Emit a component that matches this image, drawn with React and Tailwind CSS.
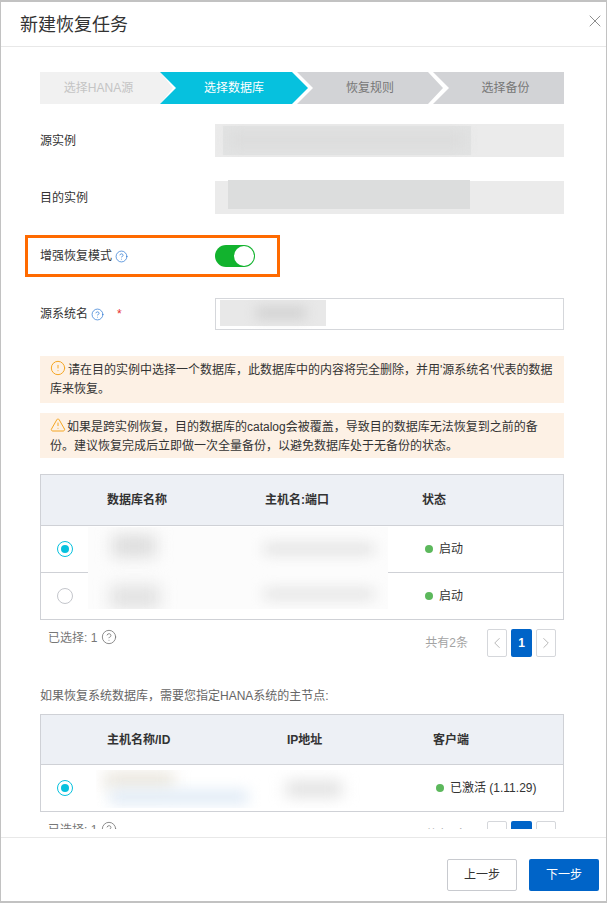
import React from 'react';
import { X, ChevronLeft, ChevronRight, CircleHelp, CircleAlert, TriangleAlert } from 'lucide-react';

const Blur = ({ className }) => <div className={`absolute ${className}`} />;

const Radio = ({ checked }) =>
  checked ? (
    <span className="flex h-[16px] w-[16px] items-center justify-center rounded-full border border-[#06c1de] bg-white">
      <span className="h-[8px] w-[8px] rounded-full bg-[#06c1de]" />
    </span>
  ) : (
    <span className="block h-[16px] w-[16px] rounded-full border border-[#c4c6cc] bg-white" />
  );

const Pagination = () => (
  <div className="flex items-center">
    <span className="mr-[19px] text-[12px] text-[#a3a3a3]">共有2条</span>
    <span className="flex h-[28px] w-[20px] items-center justify-center rounded-[2px] border border-[#d5d7db] text-[#a0a0a0]">
      <ChevronLeft size={20} strokeWidth={1} />
    </span>
    <span className="ml-[4px] flex h-[28px] w-[21px] items-center justify-center rounded-[2px] bg-[#0064c8] text-[12px] font-bold text-white">
      1
    </span>
    <span className="ml-[4px] flex h-[28px] w-[20px] items-center justify-center rounded-[2px] border border-[#d5d7db] text-[#a0a0a0]">
      <ChevronRight size={20} strokeWidth={1} />
    </span>
  </div>
);

const Status = ({ text, className }) => (
  <div className={`flex items-center text-[12px] text-[#333] ${className}`}>
    <span className="mr-[6px] h-[8px] w-[8px] rounded-full bg-[#5cb85c]" />
    {text}
  </div>
);

const Selected = () => (
  <div className="flex h-[37px] justify-between pr-[8px] pl-[8px]">
    <span className="mt-[8px] flex h-[20px] items-center text-[#777]">
      已选择: 1
      <CircleHelp size={16} strokeWidth={1.25} className="ml-[4px] mb-[3px]" />
    </span>
    <div className="mt-[9px]"><Pagination /></div>
  </div>
);

export default function App() {
  return (
    <div className="flex h-[903px] w-[607px] flex-col overflow-hidden border-t-[2px] border-r-[1px] border-b-[2px] border-l-[1px] border-[#c2c2c2] bg-white font-['Liberation_Sans','Noto_Sans_CJK_SC',sans-serif] text-[12px] text-[#333]">
      <div className="flex h-[45px] shrink-0 items-center justify-between border-b border-[#e8e8e8] pr-[1px] pl-[19px]">
        <h1 className="mt-[3px] text-[18px] font-normal text-[#333]">新建恢复任务</h1>
        <X size={20} strokeWidth={1} className="mb-[6px] text-[#777]" />
      </div>

      <div className="h-[782px] shrink-0 overflow-hidden pt-[25px] pr-[42px] pl-[39px]">
        <div className="flex h-[32px] text-[12px]">
          <div className="flex w-[133px] items-center justify-center bg-[#f1f1f1] pr-[16px] text-[#c4c4c4] [clip-path:polygon(0_0,120px_0,133px_50%,120px_100%,0_100%)]">
            选择HANA源
          </div>
          <div className="ml-[-13px] flex w-[148px] items-center justify-center bg-[#06c1de] text-white [clip-path:polygon(0_0,132px_0,148px_50%,132px_100%,0_100%,16px_50%)]">
            选择数据库
          </div>
          <div className="ml-[-11px] flex w-[146px] items-center justify-center bg-[#d2d3d6] text-[#777] [clip-path:polygon(0_0,131px_0,146px_50%,131px_100%,0_100%,16px_50%)]">
            恢复规则
          </div>
          <div className="ml-[-10px] flex w-[131px] items-center justify-center bg-[#d2d3d6] pl-[14px] text-[#777] [clip-path:polygon(0_0,100%_0,100%_100%,0_100%,16px_50%)]">
            选择备份
          </div>
        </div>

        <div className="mt-[20px] flex h-[33px] items-center">
          <label className="w-[175px] shrink-0">源实例</label>
          <div className="relative h-full flex-1 overflow-hidden bg-[#ebebeb]">
            <div className="absolute top-[2px] left-[8px] h-[29px] w-[248px] bg-[#e2e3e3]" />
            <Blur className="top-[8px] left-[14px] h-[16px] w-[236px] bg-[#dcdcdc] blur-[7px]" />
          </div>
        </div>

        <div className="mt-[24px] flex h-[33px] items-center">
          <label className="w-[175px] shrink-0">目的实例</label>
          <div className="relative h-full flex-1 bg-[#ebebeb]">
            <div className="absolute top-[-1px] left-[13px] h-[29px] w-[242px] bg-[#dcdddd]" />
          </div>
        </div>

        <div className="relative mt-[31px] flex h-[22px] items-center">
          <label className="flex w-[175px] shrink-0 items-center">
            增强恢复模式
            <CircleHelp size={13} strokeWidth={1.25} className="ml-[3px] text-[#1f6fd0]" />
          </label>
          <div className="flex h-[22px] w-[40px] items-center justify-end rounded-full bg-[#12b32e] pr-[1px]">
            <span className="h-[20px] w-[20px] rounded-full bg-white" />
          </div>
          <div className="absolute top-[-10px] left-[-15px] h-[42px] w-[255px] border-[3px] border-[#ff6a00]" />
        </div>

        <div className="mt-[31px] flex h-[32px] items-center">
          <label className="flex w-[175px] shrink-0 items-center">
            源系统名
            <CircleHelp size={13} strokeWidth={1.25} className="ml-[3px] text-[#1f6fd0]" />
            <span className="ml-[13px] text-[#e62e2e]">*</span>
          </label>
          <div className="relative h-full flex-1 overflow-hidden border border-[#d5d7db] bg-white">
            <div className="absolute top-[1px] left-[4px] h-[26px] w-[106px] bg-[#e8e8e8]" />
            <Blur className="top-[8px] left-[40px] h-[12px] w-[50px] bg-[#d2d2d2] blur-[6px]" />
          </div>
        </div>

        <div className="mt-[26px] h-[47px] bg-[#fdf1e5] px-[10px] pt-[4px] leading-[19px]">
          <CircleAlert size={16} strokeWidth={1.5} className="mr-[2px] inline-block align-[-2px] text-[#f5a623]" />
          请在目的实例中选择一个数据库，此数据库中的内容将完全删除，并用'源系统名'代表的数据库来恢复。
        </div>

        <div className="mt-[10px] h-[45px] bg-[#fdf1e5] px-[10px] pt-[4px] leading-[19px]">
          <TriangleAlert size={16} strokeWidth={1.5} className="mr-[1px] inline-block align-[-2px] text-[#f5a623]" />
          如果是跨实例恢复，目的数据库的catalog会被覆盖，导致目的数据库无法恢复到之前的备份。建议恢复完成后立即做一次全量备份，以避免数据库处于无备份的状态。
        </div>

        <div className="relative mt-[16px] border border-[#cfd1d6]">
          <div className="grid h-[51px] grid-cols-[66px_158px_157px_1fr] items-center border-b border-[#cfd1d6] bg-[#edf0f5] font-bold">
            <span />
            <span>数据库名称</span>
            <span>主机名:端口</span>
            <span>状态</span>
          </div>
          <div className="grid h-[47px] grid-cols-[66px_158px_157px_1fr] items-center border-b border-[#cfd1d6]">
            <span className="pl-[16px]"><Radio checked /></span>
            <span />
            <span />
            <Status text="启动" className="pl-[3px]" />
          </div>
          <div className="grid h-[46px] grid-cols-[66px_158px_157px_1fr] items-center">
            <span className="pl-[16px]"><Radio /></span>
            <span />
            <span />
            <Status text="启动" className="pl-[3px]" />
          </div>
          <div className="absolute top-[52px] left-[47px] h-[82px] w-[300px] overflow-hidden bg-[#fcfcfc]">
            <Blur className="top-[8px] left-[24px] h-[22px] w-[44px] bg-[#dcdcdc] blur-[8px]" />
            <Blur className="top-[17px] left-[176px] h-[10px] w-[110px] bg-[#dedede] blur-[7px]" />
            <Blur className="top-[58px] left-[22px] h-[24px] w-[50px] bg-[#e2e2e2] blur-[8px]" />
            <Blur className="top-[62px] left-[176px] h-[10px] w-[110px] bg-[#e0e0e0] blur-[7px]" />
          </div>
        </div>

        <Selected />

        <p className="mt-[30px] leading-[18px] text-[#666]">如果恢复系统数据库，需要您指定HANA系统的主节点:</p>

        <div className="relative mt-[9px] border border-[#cfd1d6]">
          <div className="grid h-[50px] grid-cols-[66px_180px_146px_1fr] items-center border-b border-[#cfd1d6] bg-[#edf0f5] font-bold">
            <span />
            <span>主机名称/ID</span>
            <span>IP地址</span>
            <span>客户端</span>
          </div>
          <div className="grid h-[46px] grid-cols-[66px_180px_146px_1fr] items-center">
            <span className="pl-[16px]"><Radio checked /></span>
            <span />
            <span />
            <Status text="已激活 (1.11.29)" className="pl-[3px]" />
          </div>
          <div className="absolute top-[55px] left-[55px] h-[38px] w-[290px] overflow-hidden">
            <Blur className="top-[2px] left-[8px] h-[16px] w-[70px] bg-[#e9e5dc] blur-[8px]" />
            <Blur className="top-[20px] left-[14px] h-[14px] w-[138px] bg-[#e0ebf6] blur-[7px]" />
            <Blur className="top-[12px] left-[190px] h-[14px] w-[56px] bg-[#dcdcdc] blur-[8px]" />
          </div>
        </div>

        <Selected />
      </div>

      <div className="mt-[8px] flex flex-1 items-start justify-end gap-[12px] border-t border-[#e8e8e8] pt-[21px] pr-[7px]">
        <button className="h-[32px] w-[70px] rounded-[2px] border border-[#c8cacf] bg-white text-[12px] text-[#333]">上一步</button>
        <button className="h-[32px] w-[70px] rounded-[2px] bg-[#0064c8] text-[12px] text-white">下一步</button>
      </div>
    </div>
  );
}
